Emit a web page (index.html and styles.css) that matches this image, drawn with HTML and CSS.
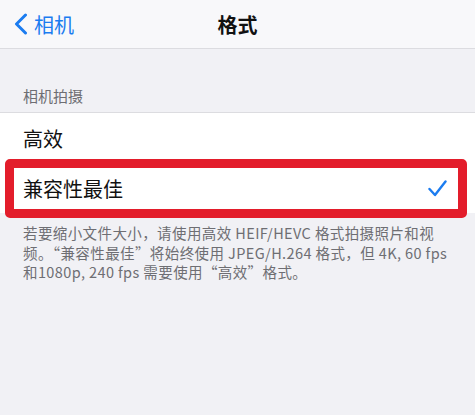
FILE: index.html
```html
<!DOCTYPE html>
<html lang="zh-CN">
<head>
    <meta charset="UTF-8">
    <title>格式</title>
    <link rel="stylesheet" href="styles.css">
</head>
<body>
    <div class="nav">
        <div class="back">
            <svg class="chevron" width="14" height="22" viewBox="0 0 14 22">
                <path d="M11.5 2 L2.5 11 L11.5 20" fill="none" stroke="#1b7cf0" stroke-width="3" stroke-linecap="round" stroke-linejoin="round"/>
            </svg>
            <span>相机</span>
        </div>
        <div class="nav-title">格式</div>
    </div>
    <div class="section-header">相机拍摄</div>
    <div class="group">
        <div class="cell">高效</div>
        <div class="cell selected">
            <span>兼容性最佳</span>
            <svg class="check" width="19" height="17" viewBox="0 0 19 17">
                <path d="M1.5 9 L7 15 L17.5 1.5" fill="none" stroke="#1b7cf0" stroke-width="2.4" stroke-linecap="round" stroke-linejoin="round"/>
            </svg>
        </div>
    </div>
    <div class="footer">若要缩小文件大小，请使用高效 HEIF/HEVC 格式拍摄照片和视<br>频。“兼容性最佳”将始终使用 JPEG/H.264 格式，但 4K, 60 fps<br>和1080p, 240 fps 需要使用“高效”格式。</div>
</body>
</html>
```

FILE: styles.css
```css
body {
    margin: 0;
    background: #f1f1f5;
    font-family: "Noto Sans CJK SC", "Noto Sans", sans-serif;
    color: #111;
    height: 415px;
    overflow: hidden;
}
.nav {
    position: relative;
    height: 48px;
    background: #f8f8fa;
    border-bottom: 1px solid #dcdce0;
    display: flex;
    align-items: center;
    justify-content: center;
}
.back {
    position: absolute;
    left: 14px;
    top: 0;
    height: 48px;
    display: flex;
    align-items: center;
    gap: 6px;
    color: #1b7cf0;
    font-size: 20px;
}
.nav-title {
    font-size: 20px;
    font-weight: bold;
}
.section-header {
    padding: 36px 23px 5px;
    font-size: 15px;
    line-height: 22px;
    color: #6e6e73;
    border-bottom: 1px solid #dcdce0;
}
.group {
    background: #fff;
}
.cell {
    height: 50px;
    padding: 0 23px;
    display: flex;
    align-items: center;
    font-size: 20px;
}
.cell.selected {
    position: relative;
    justify-content: space-between;
    padding-right: 28px;
}
.cell.selected::after {
    content: "";
    position: absolute;
    left: 5px;
    right: 8px;
    top: -4px;
    bottom: -5px;
    border: 9px solid #e31d2b;
    border-radius: 5px;
}
.footer {
    padding: 10px 23px 0;
    font-size: 14.5px;
    line-height: 19.5px;
    letter-spacing: 0.4px;
    color: #6e6e73;
    white-space: nowrap;
}
```
